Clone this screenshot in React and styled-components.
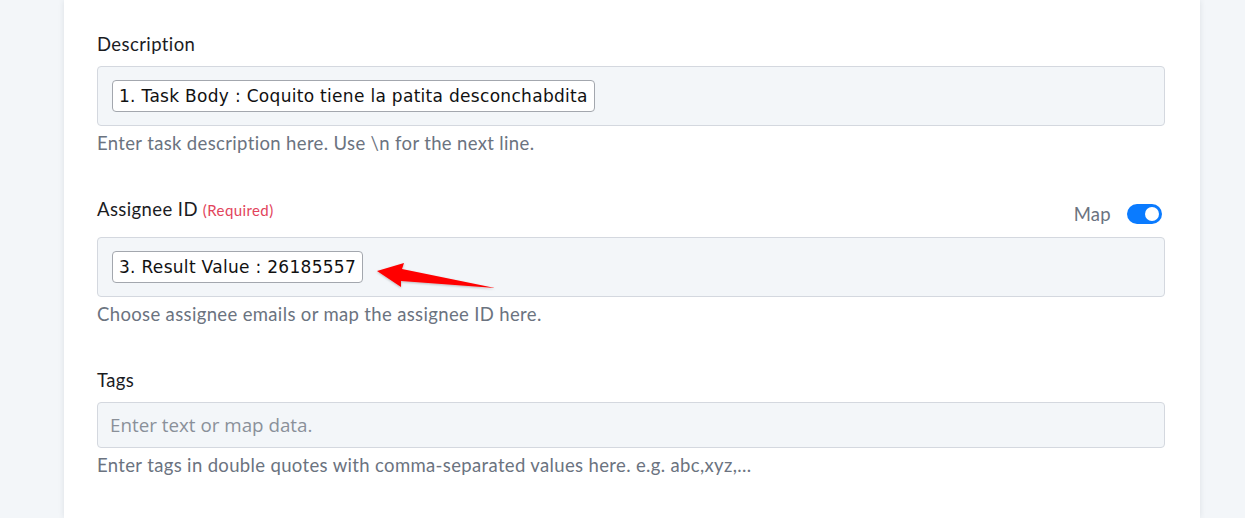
import styled, { createGlobalStyle } from 'styled-components'

const GlobalStyle = createGlobalStyle`
  html, body {
    margin: 0;
    padding: 0;
    background: #f3f6f9;
  }
  body {
    font-family: Lato, "Noto Sans", sans-serif;
  }
`

const Page = styled.div`
  padding-left: 64px;
  height: 518px;
  overflow: hidden;
`

const Card = styled.div`
  width: 1136px;
  min-height: 518px;
  box-sizing: border-box;
  background: #ffffff;
  box-shadow: 0 0 6px rgba(30, 40, 60, 0.1);
  padding: 33px 35px 0 33px;
`

const Field = styled.div`
  margin-bottom: 44px;
`

const Header = styled.div`
  display: flex;
  justify-content: space-between;
  align-items: flex-start;
  height: ${p => p.$h || 22}px;
  margin-bottom: 11px;
`

const Label = styled.div`
  font-size: 18.5px;
  letter-spacing: 0.4px;
  line-height: 22px;
  color: #1b1c1f;
`

const Required = styled.span`
  font-size: 15px;
  letter-spacing: 0.4px;
  color: #e2445c;
  margin-left: 5px;
`

const MapSwitch = styled.label`
  display: flex;
  align-items: center;
  gap: 16px;
  margin-top: 5px;
  margin-right: 3px;
  font-size: 18.5px;
  letter-spacing: 0.3px;
  color: #6b7380;
`

const Toggle = styled.span`
  position: relative;
  width: 35px;
  height: 20px;
  border-radius: 10px;
  background: #0a7bff;
  &::after {
    content: '';
    position: absolute;
    right: 3px;
    top: 3px;
    width: 14px;
    height: 14px;
    border-radius: 50%;
    background: #ffffff;
  }
`

const InputBox = styled.div`
  position: relative;
  box-sizing: border-box;
  height: ${p => p.$h || 60}px;
  background: #f3f6f9;
  border: 1px solid #d4d8df;
  border-radius: 4px;
  padding: 13px 14px;
  display: flex;
  align-items: flex-start;
`

const Chip = styled.span`
  display: inline-block;
  box-sizing: border-box;
  height: 32px;
  line-height: 30px;
  padding: 0 6px;
  background: #ffffff;
  border: 1px solid #a3a7ae;
  border-radius: 4px;
  font-family: "DejaVu Sans", Verdana, sans-serif;
  font-size: 17px;
  letter-spacing: 0.3px;
  color: #111111;
  white-space: nowrap;
`

const Placeholder = styled.span`
  align-self: center;
  margin-left: -2px;
  font-family: "Open Sans", sans-serif;
  font-size: 18.8px;
  color: #8a9099;
`

const Help = styled.div`
  margin-top: 6px;
  font-size: 18.5px;
  letter-spacing: 0.35px;
  line-height: 22px;
  color: #6b7380;
`

const Arrow = styled.svg`
  position: absolute;
  left: 273px;
  top: 21px;
  width: 130px;
  height: 35px;
  overflow: visible;
`

const App = () => (
  <>
    <GlobalStyle />
    <Page>
      <Card>
        <Field>
          <Header>
            <Label>Description</Label>
          </Header>
          <InputBox>
            <Chip>1. Task Body : Coquito tiene la patita desconchabdita</Chip>
          </InputBox>
          <Help>Enter task description here. Use \n for the next line.</Help>
        </Field>

        <Field>
          <Header $h={28}>
            <Label>
              Assignee ID<Required>(Required)</Required>
            </Label>
            <MapSwitch>
              Map
              <Toggle />
            </MapSwitch>
          </Header>
          <InputBox>
            <Chip>3. Result Value : 26185557</Chip>
            <Arrow viewBox="370 258 130 35">
              <defs>
                <filter id="sh" x="-20%" y="-50%" width="140%" height="200%">
                  <feDropShadow dx="0" dy="1" stdDeviation="1" floodColor="#000" floodOpacity="0.25" />
                </filter>
              </defs>
              <polygon
                points="376,270 403,262 401,268 494,287 400,280 400,286"
                fill="#ff0000"
                filter="url(#sh)"
              />
            </Arrow>
          </InputBox>
          <Help>Choose assignee emails or map the assignee ID here.</Help>
        </Field>

        <Field>
          <Header>
            <Label>Tags</Label>
          </Header>
          <InputBox $h={46}>
            <Placeholder>Enter text or map data.</Placeholder>
          </InputBox>
          <Help>Enter tags in double quotes with comma-separated values here. e.g. abc,xyz,...</Help>
        </Field>
      </Card>
    </Page>
  </>
)

export default App
